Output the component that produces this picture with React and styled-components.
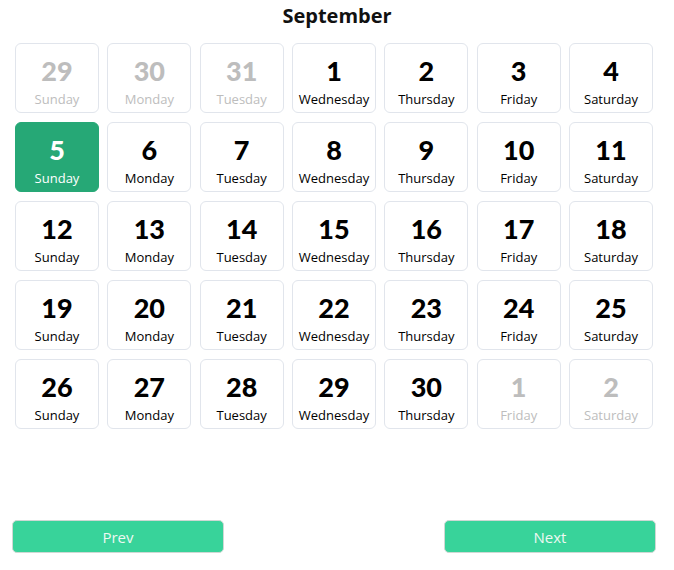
import styled, { createGlobalStyle } from "styled-components";

const GlobalStyle = createGlobalStyle`
  body {
    margin: 0;
    background: #fff;
    font-family: "Open Sans", "Noto Sans", sans-serif;
  }
`;

const Page = styled.div`
  min-height: 570px;
  display: flex;
  flex-direction: column;
  box-sizing: border-box;
  padding-bottom: 17px;
`;

const Title = styled.h2`
  margin: 4px 0 0;
  text-align: center;
  font-size: 20px;
  line-height: 24px;
  font-weight: 700;
  color: #111;
`;

const Grid = styled.div`
  width: 638px;
  margin: 15px 0 0 15px;
  display: grid;
  grid-template-columns: repeat(7, 1fr);
  column-gap: 8.33px;
  row-gap: 9px;
`;

const Cell = styled.div`
  height: 70px;
  box-sizing: border-box;
  border: 1px solid ${(p) => (p.$active ? "#26a876" : "#e1e5ec")};
  border-radius: 6px;
  background: ${(p) => (p.$active ? "#26a876" : "#fff")};
  color: ${(p) => (p.$active ? "#fff" : p.$muted ? "#bdbdbd" : "#000")};
  display: flex;
  flex-direction: column;
  align-items: center;
  padding-top: 12px;
`;

const Num = styled.div`
  font-family: Lato, "Noto Sans", sans-serif;
  font-weight: 900;
  font-size: 27px;
  line-height: 30px;
`;

const Day = styled.div`
  font-size: 13px;
  line-height: 18px;
  margin-top: 4px;
`;

const Footer = styled.div`
  margin-top: auto;
  display: flex;
  justify-content: space-between;
  padding: 0 18px 0 12px;
`;

const Button = styled.button`
  width: 212px;
  height: 33px;
  border: 1px solid #cfd8d4;
  border-radius: 5px;
  background: #38d39a;
  color: #eef8f2;
  font-family: "Open Sans", "Noto Sans", sans-serif;
  font-size: 15px;
  cursor: pointer;
`;

const names = ["Sunday", "Monday", "Tuesday", "Wednesday", "Thursday", "Friday", "Saturday"];

const days = [
  ...[29, 30, 31].map((n) => ({ n, muted: true })),
  ...Array.from({ length: 30 }, (_, i) => ({ n: i + 1 })),
  ...[1, 2].map((n) => ({ n, muted: true })),
];

export default function App() {
  return (
    <Page>
      <GlobalStyle />
      <Title>September</Title>
      <Grid>
        {days.map((d, i) => (
          <Cell key={i} $muted={d.muted} $active={!d.muted && d.n === 5}>
            <Num>{d.n}</Num>
            <Day>{names[i % 7]}</Day>
          </Cell>
        ))}
      </Grid>
      <Footer>
        <Button>Prev</Button>
        <Button>Next</Button>
      </Footer>
    </Page>
  );
}
